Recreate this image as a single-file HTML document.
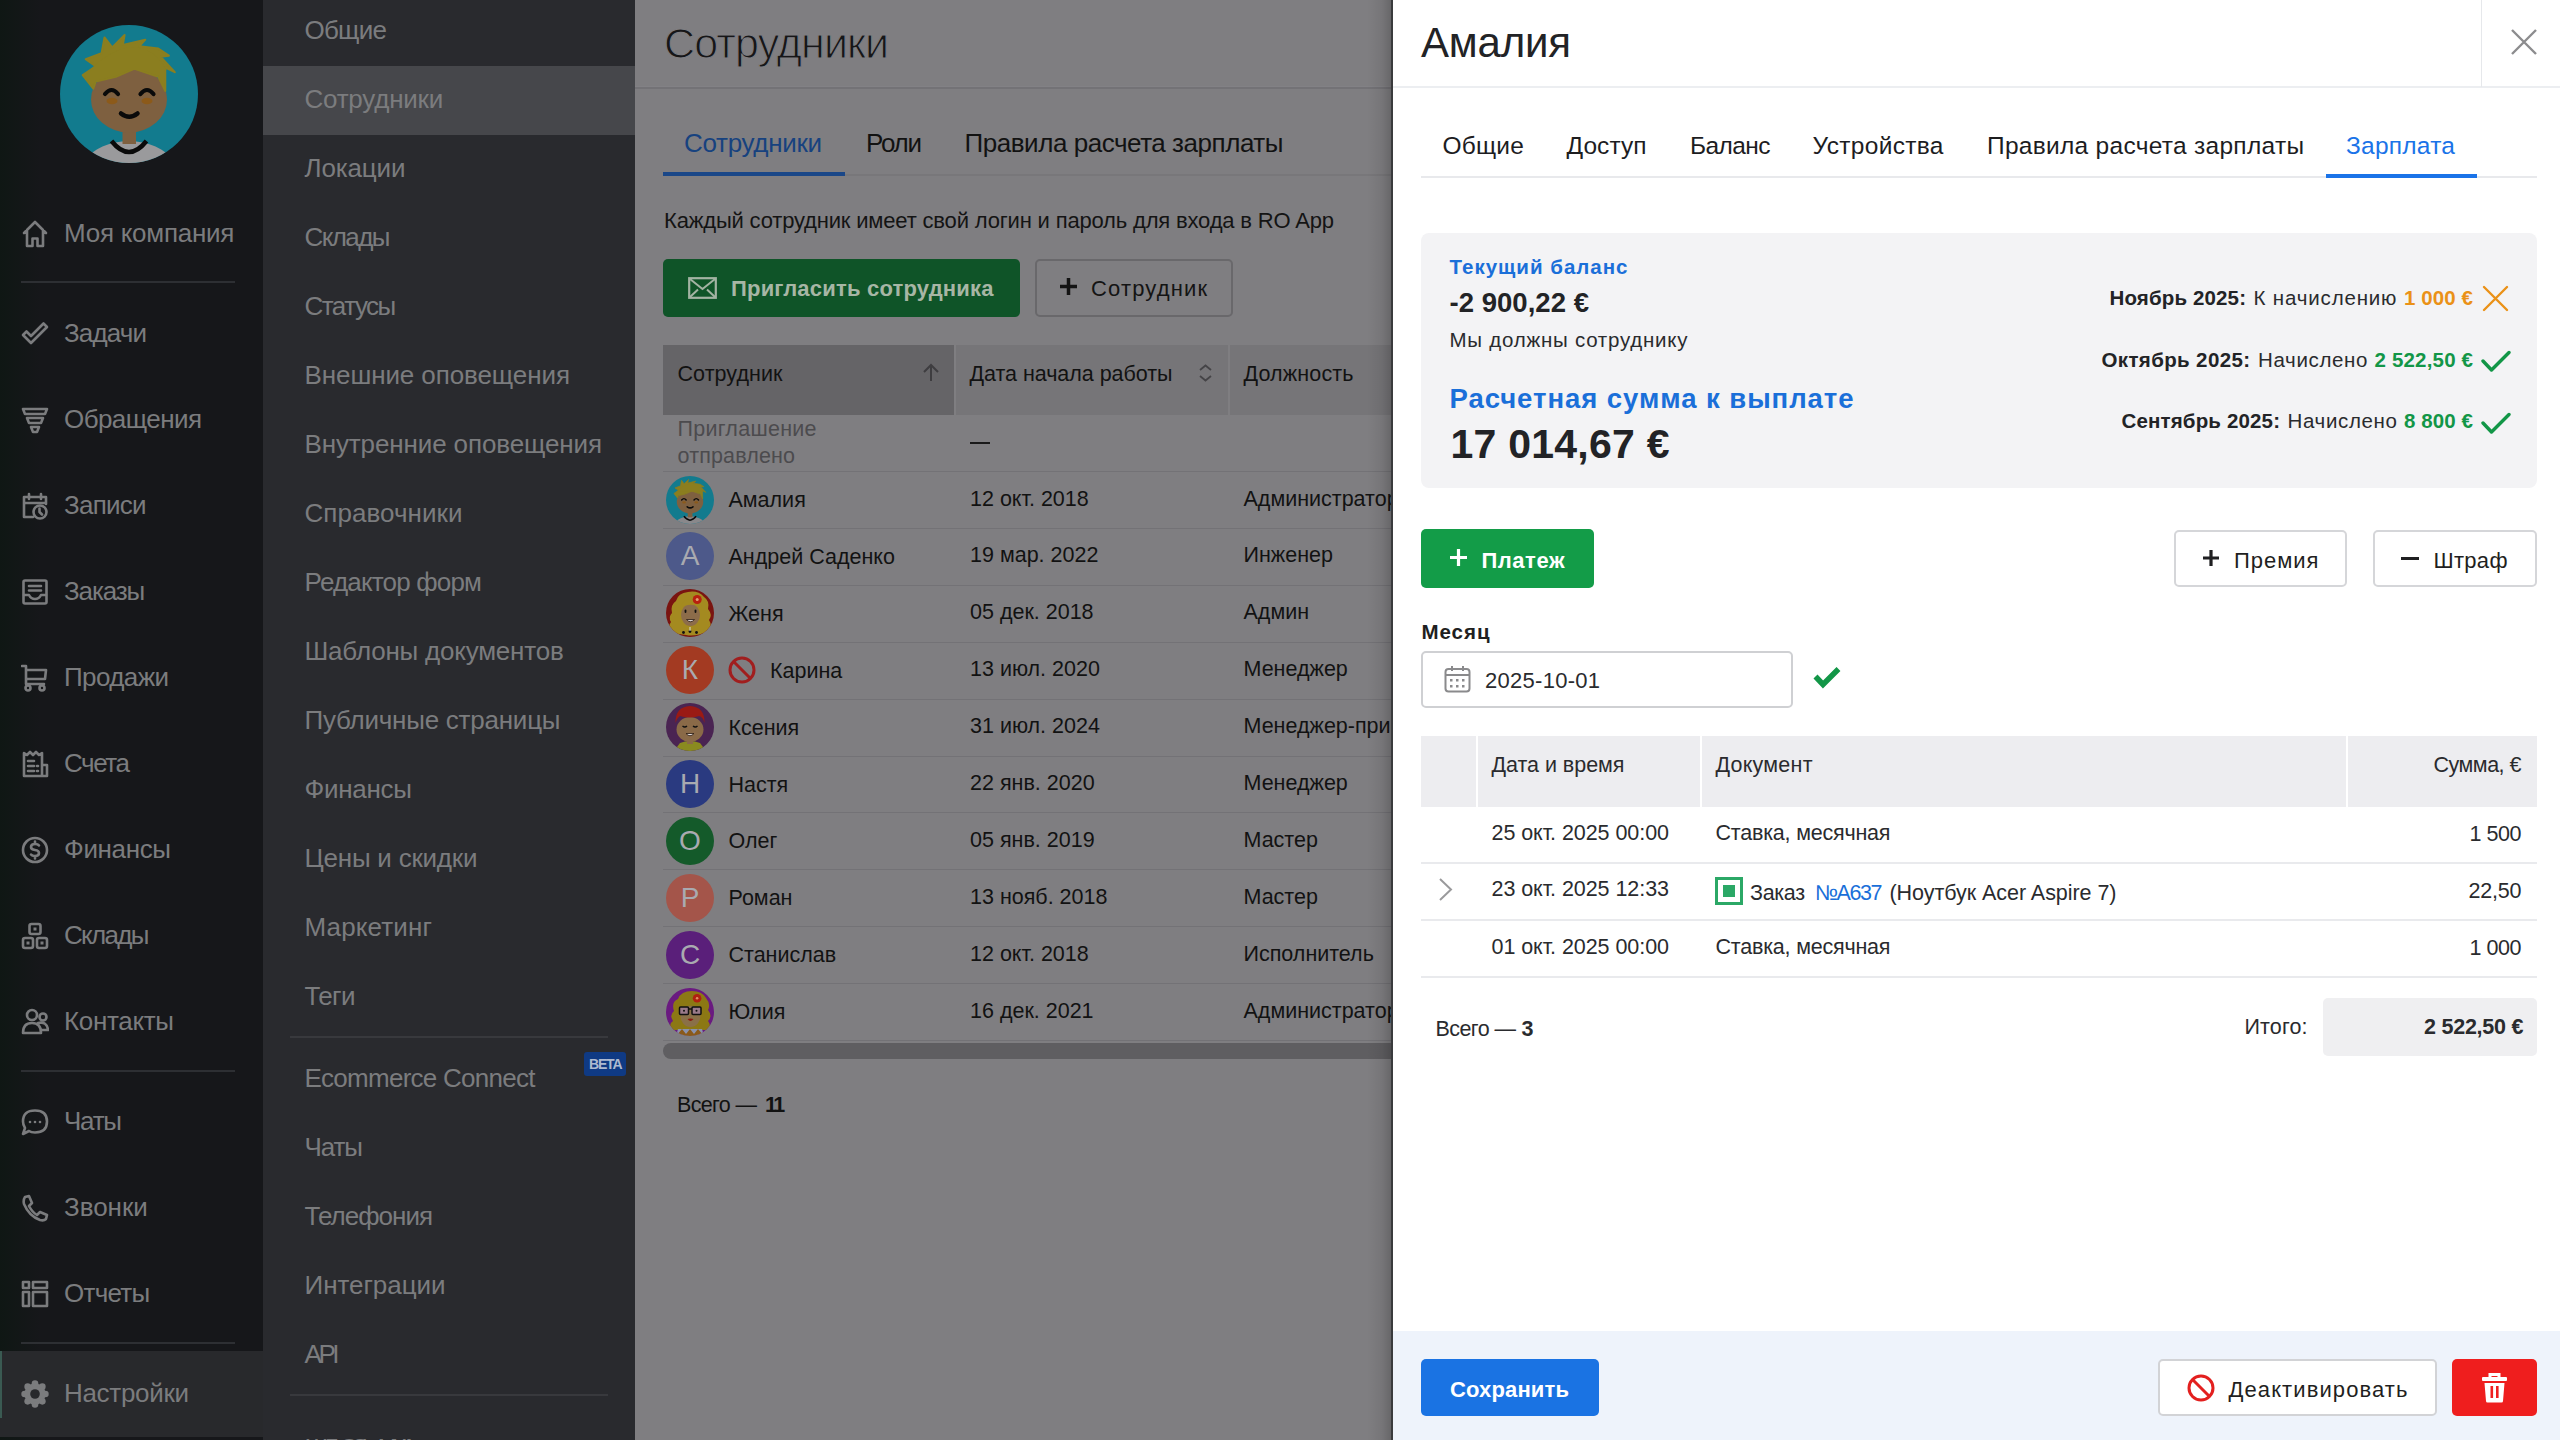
<!DOCTYPE html>
<html><head><meta charset="utf-8"><title>Сотрудники</title>
<style>
html,body{margin:0;padding:0;width:2560px;height:1440px;overflow:hidden;background:#7f7e81;}
body{position:relative;font-family:'Liberation Sans',sans-serif;}
</style></head><body>
<div style="position:absolute;left:0px;top:0px;width:263px;height:1440px;background:#16171a;"></div>
<div style="position:absolute;left:0px;top:0px;width:40px;height:1440px;background:linear-gradient(90deg,#0f1714 0%,rgba(22,23,26,0) 100%);"></div>
<div style="position:absolute;left:0px;top:1351px;width:263px;height:86px;background:#28292c;"></div>
<div style="position:absolute;left:0px;top:1351px;width:1.5px;height:67px;background:#3a5a52;"></div>
<div style="position:absolute;left:21px;top:281px;width:214px;height:2px;background:#2d2f33;"></div>
<div style="position:absolute;left:21px;top:1070px;width:214px;height:2px;background:#2d2f33;"></div>
<div style="position:absolute;left:21px;top:1342px;width:214px;height:2px;background:#2d2f33;"></div>
<svg style="position:absolute;left:59.5px;top:24.5px" width="138" height="138" viewBox="0 0 138 138">
<defs><clipPath id="cb1"><circle cx="69" cy="69" r="69"/></clipPath></defs>
<g clip-path="url(#cb1)">
<rect width="138" height="138" fill="#127b8e"/>
<path d="M10 160 C 22 128, 42 117, 69 116 C 96 117, 116 128, 128 160 Z" fill="#9a9a9c"/>
<rect x="62.5" y="98" width="13.5" height="21" fill="#7e6040"/>
<path d="M51.5 116 Q69 138 86.5 116" stroke="#0a0a0a" stroke-width="4.5" fill="none"/>
<ellipse cx="69" cy="74.5" rx="38" ry="33" fill="#7e6040"/>
<path d="M22.7 50.1 L35.7 41.3 L25.7 34.2 L41.6 28.3 L44.5 12.4 L52.2 22.4 L64.6 10 L62.8 20 L85.3 14.7 L79.4 21.2 L98.3 23.6 L108.9 30.7 L100.6 31.8 L114.8 47.2 L105.3 42.5 L105.3 66.1 L98.3 51.9 L74.7 43.7 L55.8 51.9 L35.7 56.6 L33.3 63.7 Z" fill="#8b7e1f" stroke="#8b7e1f" stroke-width="2" stroke-linejoin="round"/>
<path d="M30 45 Q50 25 70 22 Q95 22 106 45 Z" fill="#8b7e1f"/>
<path d="M45 69 Q51.6 61 58 69" stroke="#0a0a0a" stroke-width="4.2" fill="none" stroke-linecap="round"/>
<path d="M80.5 69 Q87 61 93.5 69" stroke="#0a0a0a" stroke-width="4.2" fill="none" stroke-linecap="round"/>
<ellipse cx="52" cy="76" rx="5.5" ry="3.2" fill="#8c5a1a"/>
<ellipse cx="87" cy="76" rx="5.5" ry="3.2" fill="#8c5a1a"/>
<path d="M61 88.5 Q69.3 95 77.5 88.5" stroke="#0a0a0a" stroke-width="4.5" fill="none" stroke-linecap="round"/>
</g></svg>
<svg style="position:absolute;left:21px;top:220px;" width="28" height="28" viewBox="0 0 28 28"><path d="M3 13 L14 2 L25 13 M6 10 V26 H11.5 V18.5 H16.5 V26 H22 V10" fill="none" stroke="#7b7c7e" stroke-width="2.6" stroke-linejoin="round" stroke-linecap="round"/></svg>
<div style="font-family:'Liberation Sans',sans-serif;font-size:26px;line-height:26px;font-weight:400;color:#7b7c7e;letter-spacing:-0.256px;position:absolute;left:64.00px;top:220.00px;white-space:pre;">Моя компания</div>
<svg style="position:absolute;left:21px;top:320px;" width="28" height="28" viewBox="0 0 28 28"><path d="M2 15 L10 23 L26 7 L22.5 3.5 L10 16 L5.5 11.5 Z" fill="none" stroke="#7b7c7e" stroke-width="2.6" stroke-linejoin="round" stroke-linecap="round" stroke-width="2.2"/></svg>
<div style="font-family:'Liberation Sans',sans-serif;font-size:26px;line-height:26px;font-weight:400;color:#7b7c7e;letter-spacing:-0.859px;position:absolute;left:64.00px;top:320.00px;white-space:pre;">Задачи</div>
<svg style="position:absolute;left:21px;top:406px;" width="28" height="28" viewBox="0 0 28 28"><path d="M2 3 H26 L24 8 H4 Z M6 12 H22 L20 17 H8 Z M10 21 H18 L16 26 H12 Z" fill="none" stroke="#7b7c7e" stroke-width="2.6" stroke-linejoin="round" stroke-linecap="round" stroke-width="2.3"/></svg>
<div style="font-family:'Liberation Sans',sans-serif;font-size:26px;line-height:26px;font-weight:400;color:#7b7c7e;letter-spacing:-0.570px;position:absolute;left:64.00px;top:406.00px;white-space:pre;">Обращения</div>
<svg style="position:absolute;left:21px;top:492px;" width="28" height="28" viewBox="0 0 28 28"><path d="M12 25 H3 V5 H25 V12 M3 11 H25 M8 2 V7 M20 2 V7 M12 5 H16" fill="none" stroke="#7b7c7e" stroke-width="2.6" stroke-linejoin="round" stroke-linecap="round" stroke-width="2.3"/><circle cx="19" cy="20" r="6.5" fill="none" stroke="#7b7c7e" stroke-width="2.6" stroke-linejoin="round" stroke-linecap="round" stroke-width="2.3"/><path d="M18.5 16.5 V20 L21 22.5" fill="none" stroke="#7b7c7e" stroke-width="2.6" stroke-linejoin="round" stroke-linecap="round" stroke-width="2"/></svg>
<div style="font-family:'Liberation Sans',sans-serif;font-size:26px;line-height:26px;font-weight:400;color:#7b7c7e;letter-spacing:-0.759px;position:absolute;left:64.00px;top:492.00px;white-space:pre;">Записи</div>
<svg style="position:absolute;left:21px;top:578px;" width="28" height="28" viewBox="0 0 28 28"><rect x="2.5" y="2.5" width="23" height="23" rx="1.5" fill="none" stroke="#7b7c7e" stroke-width="2.6" stroke-linejoin="round" stroke-linecap="round" stroke-width="2.4"/><path d="M8 8 H20 M8 12.5 H20 M3 17 H8 Q10 21 14 21 Q18 21 20 17 H25" fill="none" stroke="#7b7c7e" stroke-width="2.6" stroke-linejoin="round" stroke-linecap="round" stroke-width="2.3"/></svg>
<div style="font-family:'Liberation Sans',sans-serif;font-size:26px;line-height:26px;font-weight:400;color:#7b7c7e;letter-spacing:-1.128px;position:absolute;left:64.00px;top:578.00px;white-space:pre;">Заказы</div>
<svg style="position:absolute;left:21px;top:664px;" width="28" height="28" viewBox="0 0 28 28"><path d="M1 2 H5 V20 H23 M5 6 H25 L24 15 H5" fill="none" stroke="#7b7c7e" stroke-width="2.6" stroke-linejoin="round" stroke-linecap="round" stroke-width="2.3"/><circle cx="7" cy="24" r="2.5" fill="none" stroke="#7b7c7e" stroke-width="2.6" stroke-linejoin="round" stroke-linecap="round" stroke-width="2.2"/><circle cx="21" cy="24" r="2.5" fill="none" stroke="#7b7c7e" stroke-width="2.6" stroke-linejoin="round" stroke-linecap="round" stroke-width="2.2"/></svg>
<div style="font-family:'Liberation Sans',sans-serif;font-size:26px;line-height:26px;font-weight:400;color:#7b7c7e;letter-spacing:-0.599px;position:absolute;left:64.00px;top:664.00px;white-space:pre;">Продажи</div>
<svg style="position:absolute;left:21px;top:750px;" width="28" height="28" viewBox="0 0 28 28"><path d="M3 26 V3 L6 5 L9 2 L12 5 L15 2 L18 5 L21 3 V26 Z M21 15 H26 V26 H21 M7 11 H13 M7 16 H13 M7 21 H13 M16 16 H17 M16 21 H17" fill="none" stroke="#7b7c7e" stroke-width="2.6" stroke-linejoin="round" stroke-linecap="round" stroke-width="2.3"/></svg>
<div style="font-family:'Liberation Sans',sans-serif;font-size:26px;line-height:26px;font-weight:400;color:#7b7c7e;letter-spacing:-1.426px;position:absolute;left:64.00px;top:750.00px;white-space:pre;">Счета</div>
<svg style="position:absolute;left:21px;top:836px;" width="28" height="28" viewBox="0 0 28 28"><circle cx="14" cy="14" r="12" fill="none" stroke="#7b7c7e" stroke-width="2.6" stroke-linejoin="round" stroke-linecap="round" stroke-width="2.4"/><path d="M18 9.5 Q17 8 14 8 Q10 8 10 11 Q10 13.5 14 14 Q18 14.5 18 17 Q18 20 14 20 Q11 20 10 18.5 M14 5.5 V8 M14 20 V22.5" fill="none" stroke="#7b7c7e" stroke-width="2.6" stroke-linejoin="round" stroke-linecap="round" stroke-width="2.2"/></svg>
<div style="font-family:'Liberation Sans',sans-serif;font-size:26px;line-height:26px;font-weight:400;color:#7b7c7e;letter-spacing:-0.359px;position:absolute;left:64.00px;top:836.00px;white-space:pre;">Финансы</div>
<svg style="position:absolute;left:21px;top:922px;" width="28" height="28" viewBox="0 0 28 28"><rect x="8.5" y="2" width="11" height="10" rx="2" fill="none" stroke="#7b7c7e" stroke-width="2.6" stroke-linejoin="round" stroke-linecap="round" stroke-width="2.3"/><rect x="2" y="16" width="10" height="10" rx="2" fill="none" stroke="#7b7c7e" stroke-width="2.6" stroke-linejoin="round" stroke-linecap="round" stroke-width="2.3"/><rect x="16" y="16" width="10" height="10" rx="2" fill="none" stroke="#7b7c7e" stroke-width="2.6" stroke-linejoin="round" stroke-linecap="round" stroke-width="2.3"/><rect x="12.5" y="5.5" width="3" height="3" fill="#7b7c7e"/><rect x="5.5" y="19.5" width="3" height="3" fill="#7b7c7e"/><rect x="19.5" y="19.5" width="3" height="3" fill="#7b7c7e"/></svg>
<div style="font-family:'Liberation Sans',sans-serif;font-size:26px;line-height:26px;font-weight:400;color:#7b7c7e;letter-spacing:-1.688px;position:absolute;left:64.00px;top:922.00px;white-space:pre;">Склады</div>
<svg style="position:absolute;left:21px;top:1008px;" width="28" height="28" viewBox="0 0 28 28"><circle cx="11" cy="7" r="5" fill="none" stroke="#7b7c7e" stroke-width="2.6" stroke-linejoin="round" stroke-linecap="round" stroke-width="2.3"/><circle cx="22" cy="9" r="3.5" fill="none" stroke="#7b7c7e" stroke-width="2.6" stroke-linejoin="round" stroke-linecap="round" stroke-width="2.2"/><path d="M2 25 Q2 15 11 15 Q20 15 20 25 Z M17 15 Q26 13 27 22 L21 22" fill="none" stroke="#7b7c7e" stroke-width="2.6" stroke-linejoin="round" stroke-linecap="round" stroke-width="2.3"/></svg>
<div style="font-family:'Liberation Sans',sans-serif;font-size:26px;line-height:26px;font-weight:400;color:#7b7c7e;letter-spacing:-0.330px;position:absolute;left:64.00px;top:1008.00px;white-space:pre;">Контакты</div>
<svg style="position:absolute;left:21px;top:1108px;" width="28" height="28" viewBox="0 0 28 28"><path d="M14 2.5 Q26 2.5 26 13.5 Q26 24.5 14 24.5 Q10 24.5 8 23 L2 26 L4 20 Q2 17 2 13.5 Q2 2.5 14 2.5 Z" fill="none" stroke="#7b7c7e" stroke-width="2.6" stroke-linejoin="round" stroke-linecap="round" stroke-width="2.3"/><circle cx="9" cy="14" r="1.3" fill="#7b7c7e"/><circle cx="14" cy="14" r="1.3" fill="#7b7c7e"/><circle cx="19" cy="14" r="1.3" fill="#7b7c7e"/></svg>
<div style="font-family:'Liberation Sans',sans-serif;font-size:26px;line-height:26px;font-weight:400;color:#7b7c7e;letter-spacing:-1.276px;position:absolute;left:64.00px;top:1108.00px;white-space:pre;">Чаты</div>
<svg style="position:absolute;left:21px;top:1194px;" width="28" height="28" viewBox="0 0 28 28"><path d="M8 2 L11 9 L8 12 Q11 18 16 21 L19 18 L26 21 L25 25 Q23 27 19 26 Q8 22 3 10 Q2 6 4 3 Z" fill="none" stroke="#7b7c7e" stroke-width="2.6" stroke-linejoin="round" stroke-linecap="round" stroke-width="2.3"/></svg>
<div style="font-family:'Liberation Sans',sans-serif;font-size:26px;line-height:26px;font-weight:400;color:#7b7c7e;letter-spacing:-0.041px;position:absolute;left:64.00px;top:1194.00px;white-space:pre;">Звонки</div>
<svg style="position:absolute;left:21px;top:1280px;" width="28" height="28" viewBox="0 0 28 28"><rect x="2" y="2" width="6" height="6" fill="none" stroke="#7b7c7e" stroke-width="2.6" stroke-linejoin="round" stroke-linecap="round" stroke-width="2.3"/><rect x="12" y="2" width="14" height="6" fill="none" stroke="#7b7c7e" stroke-width="2.6" stroke-linejoin="round" stroke-linecap="round" stroke-width="2.3"/><rect x="2" y="12" width="6" height="14" fill="none" stroke="#7b7c7e" stroke-width="2.6" stroke-linejoin="round" stroke-linecap="round" stroke-width="2.3"/><rect x="12" y="12" width="14" height="14" fill="none" stroke="#7b7c7e" stroke-width="2.6" stroke-linejoin="round" stroke-linecap="round" stroke-width="2.3"/></svg>
<div style="font-family:'Liberation Sans',sans-serif;font-size:26px;line-height:26px;font-weight:400;color:#7b7c7e;letter-spacing:-0.725px;position:absolute;left:64.00px;top:1280.00px;white-space:pre;">Отчеты</div>
<svg style="position:absolute;left:21px;top:1380px;" width="28" height="28" viewBox="0 0 28 28"><g fill="#7b7c7e"><circle cx="14" cy="14" r="10.6"/><circle cx="24.40" cy="14.00" r="3.3"/><circle cx="21.35" cy="21.35" r="3.3"/><circle cx="14.00" cy="24.40" r="3.3"/><circle cx="6.65" cy="21.35" r="3.3"/><circle cx="3.60" cy="14.00" r="3.3"/><circle cx="6.65" cy="6.65" r="3.3"/><circle cx="14.00" cy="3.60" r="3.3"/><circle cx="21.35" cy="6.65" r="3.3"/></g><circle cx="14" cy="14" r="4.8" fill="#28292c"/></svg>
<div style="font-family:'Liberation Sans',sans-serif;font-size:26px;line-height:26px;font-weight:400;color:#7b7c7e;letter-spacing:-0.312px;position:absolute;left:64.00px;top:1380.00px;white-space:pre;">Настройки</div>
<div style="position:absolute;left:263px;top:0px;width:372px;height:1440px;background:#292a2e;"></div>
<div style="position:absolute;left:263px;top:66px;width:372px;height:69px;background:#46474b;"></div>
<div style="font-family:'Liberation Sans',sans-serif;font-size:26px;line-height:26px;font-weight:400;color:#7b7c7e;letter-spacing:-0.750px;position:absolute;left:304.50px;top:17.00px;white-space:pre;">Общие</div>
<div style="font-family:'Liberation Sans',sans-serif;font-size:26px;line-height:26px;font-weight:400;color:#7b7c7e;letter-spacing:-0.233px;position:absolute;left:304.50px;top:86.00px;white-space:pre;">Сотрудники</div>
<div style="font-family:'Liberation Sans',sans-serif;font-size:26px;line-height:26px;font-weight:400;color:#7b7c7e;letter-spacing:-0.146px;position:absolute;left:304.50px;top:155.00px;white-space:pre;">Локации</div>
<div style="font-family:'Liberation Sans',sans-serif;font-size:26px;line-height:26px;font-weight:400;color:#7b7c7e;letter-spacing:-1.587px;position:absolute;left:304.50px;top:224.00px;white-space:pre;">Склады</div>
<div style="font-family:'Liberation Sans',sans-serif;font-size:26px;line-height:26px;font-weight:400;color:#7b7c7e;letter-spacing:-1.523px;position:absolute;left:304.50px;top:293.00px;white-space:pre;">Статусы</div>
<div style="font-family:'Liberation Sans',sans-serif;font-size:26px;line-height:26px;font-weight:400;color:#7b7c7e;letter-spacing:-0.094px;position:absolute;left:304.50px;top:362.00px;white-space:pre;">Внешние оповещения</div>
<div style="font-family:'Liberation Sans',sans-serif;font-size:26px;line-height:26px;font-weight:400;color:#7b7c7e;letter-spacing:-0.123px;position:absolute;left:304.50px;top:431.00px;white-space:pre;">Внутренние оповещения</div>
<div style="font-family:'Liberation Sans',sans-serif;font-size:26px;line-height:26px;font-weight:400;color:#7b7c7e;letter-spacing:0.048px;position:absolute;left:304.50px;top:500.00px;white-space:pre;">Справочники</div>
<div style="font-family:'Liberation Sans',sans-serif;font-size:26px;line-height:26px;font-weight:400;color:#7b7c7e;letter-spacing:-0.820px;position:absolute;left:304.50px;top:569.00px;white-space:pre;">Редактор форм</div>
<div style="font-family:'Liberation Sans',sans-serif;font-size:26px;line-height:26px;font-weight:400;color:#7b7c7e;letter-spacing:-0.209px;position:absolute;left:304.50px;top:638.00px;white-space:pre;">Шаблоны документов</div>
<div style="font-family:'Liberation Sans',sans-serif;font-size:26px;line-height:26px;font-weight:400;color:#7b7c7e;letter-spacing:-0.233px;position:absolute;left:304.50px;top:707.00px;white-space:pre;">Публичные страницы</div>
<div style="font-family:'Liberation Sans',sans-serif;font-size:26px;line-height:26px;font-weight:400;color:#7b7c7e;letter-spacing:-0.276px;position:absolute;left:304.50px;top:776.00px;white-space:pre;">Финансы</div>
<div style="font-family:'Liberation Sans',sans-serif;font-size:26px;line-height:26px;font-weight:400;color:#7b7c7e;letter-spacing:-0.224px;position:absolute;left:304.50px;top:845.00px;white-space:pre;">Цены и скидки</div>
<div style="font-family:'Liberation Sans',sans-serif;font-size:26px;line-height:26px;font-weight:400;color:#7b7c7e;letter-spacing:0.135px;position:absolute;left:304.50px;top:914.00px;white-space:pre;">Маркетинг</div>
<div style="font-family:'Liberation Sans',sans-serif;font-size:26px;line-height:26px;font-weight:400;color:#7b7c7e;letter-spacing:-0.630px;position:absolute;left:304.50px;top:983.00px;white-space:pre;">Теги</div>
<div style="position:absolute;left:290px;top:1036px;width:318px;height:2px;background:#38393d;"></div>
<div style="font-family:'Liberation Sans',sans-serif;font-size:26px;line-height:26px;font-weight:400;color:#7b7c7e;letter-spacing:-0.735px;position:absolute;left:304.50px;top:1065.00px;white-space:pre;">Ecommerce Connect</div>
<div style="position:absolute;left:584px;top:1052px;width:42px;height:24px;background:#0f3a84;border-radius:3px;"></div>
<div style="font-family:'Liberation Sans',sans-serif;font-size:14px;line-height:14px;font-weight:700;color:#aebad0;letter-spacing:-1.193px;position:absolute;left:589.00px;top:1057.00px;white-space:pre;">BETA</div>
<div style="font-family:'Liberation Sans',sans-serif;font-size:26px;line-height:26px;font-weight:400;color:#7b7c7e;letter-spacing:-1.109px;position:absolute;left:304.50px;top:1134.00px;white-space:pre;">Чаты</div>
<div style="font-family:'Liberation Sans',sans-serif;font-size:26px;line-height:26px;font-weight:400;color:#7b7c7e;letter-spacing:-0.996px;position:absolute;left:304.50px;top:1203.00px;white-space:pre;">Телефония</div>
<div style="font-family:'Liberation Sans',sans-serif;font-size:26px;line-height:26px;font-weight:400;color:#7b7c7e;letter-spacing:-0.052px;position:absolute;left:304.50px;top:1272.00px;white-space:pre;">Интеграции</div>
<div style="font-family:'Liberation Sans',sans-serif;font-size:26px;line-height:26px;font-weight:400;color:#7b7c7e;letter-spacing:-3.461px;position:absolute;left:304.50px;top:1341.00px;white-space:pre;">API</div>
<div style="position:absolute;left:290px;top:1394px;width:318px;height:2px;background:#38393d;"></div>
<div style="font-family:'Liberation Sans',sans-serif;font-size:26px;line-height:26px;font-weight:400;color:#7b7c7e;letter-spacing:-6.502px;position:absolute;left:304.50px;top:1435.00px;white-space:pre;">ШЛЮЗЫ И КА</div>
<div style="position:absolute;left:635px;top:0px;width:758px;height:1440px;background:#7f7e81;"></div>
<div style="position:absolute;left:635px;top:86px;width:758px;height:1px;background:#828185;"></div>
<div style="position:absolute;left:635px;top:87px;width:758px;height:2px;background:#737276;"></div>
<div style="font-family:'Liberation Sans',sans-serif;font-size:43px;line-height:43px;font-weight:400;color:#161618;letter-spacing:-0.880px;position:absolute;left:664.00px;top:22.00px;white-space:pre;-webkit-text-stroke:1.1px #7f7e81;">Сотрудники</div>
<div style="position:absolute;left:663px;top:174px;width:730px;height:2px;background:#78777a;"></div>
<div style="position:absolute;left:663px;top:172px;width:182px;height:4px;background:#1a4788;"></div>
<div style="font-family:'Liberation Sans',sans-serif;font-size:26px;line-height:26px;font-weight:400;color:#17427f;letter-spacing:-0.316px;position:absolute;left:684.00px;top:130.00px;white-space:pre;">Сотрудники</div>
<div style="font-family:'Liberation Sans',sans-serif;font-size:26px;line-height:26px;font-weight:400;color:#121212;letter-spacing:-1.266px;position:absolute;left:866.00px;top:130.00px;white-space:pre;">Роли</div>
<div style="font-family:'Liberation Sans',sans-serif;font-size:26px;line-height:26px;font-weight:400;color:#121212;letter-spacing:-0.454px;position:absolute;left:964.50px;top:130.00px;white-space:pre;">Правила расчета зарплаты</div>
<div style="font-family:'Liberation Sans',sans-serif;font-size:22px;line-height:22px;font-weight:400;color:#141414;letter-spacing:-0.173px;position:absolute;left:664.00px;top:210.00px;white-space:pre;">Каждый сотрудник имеет свой логин и пароль для входа в RO App</div>
<div style="position:absolute;left:663px;top:259px;width:357px;height:58px;background:#0f5428;border-radius:5px;"></div>
<svg style="position:absolute;left:688px;top:277px;" width="29" height="22" viewBox="0 0 29 22"><rect x="1.2" y="1.2" width="26.6" height="19.6" fill="none" stroke="#a3b3a3" stroke-width="2.2"/><path d="M2 2 L14.5 12 L27 2 M2 20 L10 12.5 M27 20 L19 12.5" fill="none" stroke="#a3b3a3" stroke-width="2"/></svg>
<div style="font-family:'Liberation Sans',sans-serif;font-size:22px;line-height:22px;font-weight:700;color:#a7b6a5;letter-spacing:0.198px;position:absolute;left:731.00px;top:278.00px;white-space:pre;">Пригласить сотрудника</div>
<div style="position:absolute;left:1035px;top:259px;width:198px;height:58px;background:#7f7e81;border:2px solid #69686b;border-radius:5px;box-sizing:border-box;"></div>
<svg style="position:absolute;left:1059px;top:277px;" width="19" height="19" viewBox="0 0 19 19"><path d="M9.5 1 V18 M1 9.5 H18" stroke="#141414" stroke-width="3.5"/></svg>
<div style="font-family:'Liberation Sans',sans-serif;font-size:22px;line-height:22px;font-weight:400;color:#141414;letter-spacing:1.141px;position:absolute;left:1091.00px;top:278.00px;white-space:pre;">Сотрудник</div>
<div style="position:absolute;left:663px;top:345px;width:291px;height:70px;background:#656467;"></div>
<div style="position:absolute;left:956px;top:345px;width:272px;height:70px;background:#767578;"></div>
<div style="position:absolute;left:1230px;top:345px;width:163px;height:70px;background:#767578;"></div>
<div style="font-family:'Liberation Sans',sans-serif;font-size:21.5px;line-height:21.5px;font-weight:400;color:#121212;letter-spacing:0.068px;position:absolute;left:677.50px;top:364.00px;white-space:pre;">Сотрудник</div>
<svg style="position:absolute;left:922px;top:363px;" width="18" height="19" viewBox="0 0 18 19"><path d="M9 18 V2 M2 9 L9 2 L16 9" fill="none" stroke="#3e3d40" stroke-width="2"/></svg>
<div style="font-family:'Liberation Sans',sans-serif;font-size:21.5px;line-height:21.5px;font-weight:400;color:#121212;letter-spacing:-0.035px;position:absolute;left:969.50px;top:364.00px;white-space:pre;">Дата начала работы</div>
<svg style="position:absolute;left:1198px;top:364px;" width="15" height="18" viewBox="0 0 15 18"><path d="M2 6 L7.5 1.5 L13 6 M2 12 L7.5 16.5 L13 12" fill="none" stroke="#454447" stroke-width="1.8"/></svg>
<div style="font-family:'Liberation Sans',sans-serif;font-size:21.5px;line-height:21.5px;font-weight:400;color:#121212;letter-spacing:0.145px;position:absolute;left:1243.50px;top:364.00px;white-space:pre;">Должность</div>
<div style="font-family:'Liberation Sans',sans-serif;font-size:21.5px;line-height:21.5px;font-weight:400;color:#4c4b4e;letter-spacing:0.266px;position:absolute;left:677.50px;top:419.00px;white-space:pre;">Приглашение</div>
<div style="font-family:'Liberation Sans',sans-serif;font-size:21.5px;line-height:21.5px;font-weight:400;color:#4c4b4e;letter-spacing:0.149px;position:absolute;left:677.50px;top:446.00px;white-space:pre;">отправлено</div>
<div style="position:absolute;left:970px;top:441.5px;width:19.5px;height:2.0px;background:#1a1a1a;"></div>
<div style="position:absolute;left:663px;top:471px;width:730px;height:1px;background:#737276;"></div>
<div style="position:absolute;left:663px;top:528px;width:730px;height:1px;background:#737276;"></div>
<div style="position:absolute;left:663px;top:585px;width:730px;height:1px;background:#737276;"></div>
<div style="position:absolute;left:663px;top:642px;width:730px;height:1px;background:#737276;"></div>
<div style="position:absolute;left:663px;top:699px;width:730px;height:1px;background:#737276;"></div>
<div style="position:absolute;left:663px;top:756px;width:730px;height:1px;background:#737276;"></div>
<div style="position:absolute;left:663px;top:812px;width:730px;height:1px;background:#737276;"></div>
<div style="position:absolute;left:663px;top:869px;width:730px;height:1px;background:#737276;"></div>
<div style="position:absolute;left:663px;top:926px;width:730px;height:1px;background:#737276;"></div>
<div style="position:absolute;left:663px;top:983px;width:730px;height:1px;background:#737276;"></div>
<div style="position:absolute;left:663px;top:1040px;width:730px;height:1px;background:#737276;"></div>
<svg style="position:absolute;left:666px;top:475.5px" width="48" height="48" viewBox="0 0 138 138">
<defs><clipPath id="cb2"><circle cx="69" cy="69" r="69"/></clipPath></defs>
<g clip-path="url(#cb2)">
<rect width="138" height="138" fill="#127b8e"/>
<path d="M10 160 C 22 128, 42 117, 69 116 C 96 117, 116 128, 128 160 Z" fill="#89888b"/>
<rect x="62.5" y="98" width="13.5" height="21" fill="#7e6040"/>
<path d="M51.5 116 Q69 138 86.5 116" stroke="#0a0a0a" stroke-width="4.5" fill="none"/>
<ellipse cx="69" cy="74.5" rx="38" ry="33" fill="#7e6040"/>
<path d="M22.7 50.1 L35.7 41.3 L25.7 34.2 L41.6 28.3 L44.5 12.4 L52.2 22.4 L64.6 10 L62.8 20 L85.3 14.7 L79.4 21.2 L98.3 23.6 L108.9 30.7 L100.6 31.8 L114.8 47.2 L105.3 42.5 L105.3 66.1 L98.3 51.9 L74.7 43.7 L55.8 51.9 L35.7 56.6 L33.3 63.7 Z" fill="#8b7e1f" stroke="#8b7e1f" stroke-width="2" stroke-linejoin="round"/>
<path d="M30 45 Q50 25 70 22 Q95 22 106 45 Z" fill="#8b7e1f"/>
<path d="M45 69 Q51.6 61 58 69" stroke="#0a0a0a" stroke-width="4.2" fill="none" stroke-linecap="round"/>
<path d="M80.5 69 Q87 61 93.5 69" stroke="#0a0a0a" stroke-width="4.2" fill="none" stroke-linecap="round"/>
<ellipse cx="52" cy="76" rx="5.5" ry="3.2" fill="#8c5a1a"/>
<ellipse cx="87" cy="76" rx="5.5" ry="3.2" fill="#8c5a1a"/>
<path d="M61 88.5 Q69.3 95 77.5 88.5" stroke="#0a0a0a" stroke-width="4.5" fill="none" stroke-linecap="round"/>
</g></svg>
<div style="font-family:'Liberation Sans',sans-serif;font-size:21.5px;line-height:21.5px;font-weight:400;color:#121212;position:absolute;left:728.50px;top:490.00px;white-space:pre;">Амалия</div>
<div style="font-family:'Liberation Sans',sans-serif;font-size:21.5px;line-height:21.5px;font-weight:400;color:#121212;position:absolute;left:970.00px;top:489.00px;white-space:pre;">12 окт. 2018</div>
<div style="font-family:'Liberation Sans',sans-serif;font-size:21.5px;line-height:21.5px;font-weight:400;color:#121212;position:absolute;left:1243.50px;top:489.00px;white-space:pre;">Администратор</div>
<div style="position:absolute;left:666px;top:532.4px;width:48px;height:48px;border-radius:50%;background:#4d598a;"></div>
<div style="position:absolute;left:666px;top:532.4px;width:48px;height:48px;line-height:48px;text-align:center;font-family:'Liberation Sans',sans-serif;font-size:28px;color:#a9aab0;">А</div>
<div style="font-family:'Liberation Sans',sans-serif;font-size:21.5px;line-height:21.5px;font-weight:400;color:#121212;position:absolute;left:728.50px;top:547.00px;white-space:pre;">Андрей Саденко</div>
<div style="font-family:'Liberation Sans',sans-serif;font-size:21.5px;line-height:21.5px;font-weight:400;color:#121212;position:absolute;left:970.00px;top:545.00px;white-space:pre;">19 мар. 2022</div>
<div style="font-family:'Liberation Sans',sans-serif;font-size:21.5px;line-height:21.5px;font-weight:400;color:#121212;position:absolute;left:1243.50px;top:545.00px;white-space:pre;">Инженер</div>
<svg style="position:absolute;left:666px;top:589.3px" width="48" height="48" viewBox="0 0 48 48"><defs><clipPath id="cg3"><circle cx="24" cy="24" r="24"/></clipPath></defs><g clip-path="url(#cg3)"><rect width="48" height="48" fill="#7a1410"/>
<path d="M6 44 Q1 38 5 33 Q2 28 6 24 Q4 16 10 12 Q12 4 22 3 Q32 1 38 8 Q44 12 42 20 Q47 26 43 31 Q47 37 42 42 Q30 48 20 46 Z" fill="#a48a20"/>
<ellipse cx="24.5" cy="26" rx="9.5" ry="11" fill="#8c6c4a"/>
<path d="M14 18 Q18 9 27 10 Q35 12 36 20 Q30 15 22 16 Z" fill="#a48a20"/>
<circle cx="31.2" cy="10.5" r="4.5" fill="#b8200f"/><circle cx="31.2" cy="10.5" r="1.5" fill="#e0a070"/>
<rect x="18.6" y="20.5" width="1.8" height="3.5" rx="0.9" fill="#111"/><rect x="28.6" y="20.5" width="1.8" height="3.5" rx="0.9" fill="#111"/>
<path d="M20.5 30.5 Q24.5 35 28.5 30.5 Z" fill="#d8d0d0" stroke="#2a1a10" stroke-width="0.8"/>
<circle cx="17.5" cy="43.5" r="1.4" fill="#111"/><circle cx="24" cy="42.5" r="1.4" fill="#111"/><circle cx="30.5" cy="43.5" r="1.4" fill="#111"/><path d="M24 38 V42" stroke="#ddd" stroke-width="1"/></g></svg>
<div style="font-family:'Liberation Sans',sans-serif;font-size:21.5px;line-height:21.5px;font-weight:400;color:#121212;position:absolute;left:728.50px;top:604.00px;white-space:pre;">Женя</div>
<div style="font-family:'Liberation Sans',sans-serif;font-size:21.5px;line-height:21.5px;font-weight:400;color:#121212;position:absolute;left:970.00px;top:602.00px;white-space:pre;">05 дек. 2018</div>
<div style="font-family:'Liberation Sans',sans-serif;font-size:21.5px;line-height:21.5px;font-weight:400;color:#121212;position:absolute;left:1243.50px;top:602.00px;white-space:pre;">Админ</div>
<div style="position:absolute;left:666px;top:646.2px;width:48px;height:48px;border-radius:50%;background:#a33a22;"></div>
<div style="position:absolute;left:666px;top:646.2px;width:48px;height:48px;line-height:48px;text-align:center;font-family:'Liberation Sans',sans-serif;font-size:28px;color:#a9aab0;">К</div>
<svg style="position:absolute;left:728px;top:656.2px;" width="28" height="28" viewBox="0 0 28 28"><circle cx="14" cy="14" r="12" fill="none" stroke="#a11e1e" stroke-width="3"/><path d="M5.5 5.5 L22.5 22.5" stroke="#a11e1e" stroke-width="3"/></svg>
<div style="font-family:'Liberation Sans',sans-serif;font-size:21.5px;line-height:21.5px;font-weight:400;color:#121212;position:absolute;left:770.00px;top:661.00px;white-space:pre;">Карина</div>
<div style="font-family:'Liberation Sans',sans-serif;font-size:21.5px;line-height:21.5px;font-weight:400;color:#121212;position:absolute;left:970.00px;top:659.00px;white-space:pre;">13 июл. 2020</div>
<div style="font-family:'Liberation Sans',sans-serif;font-size:21.5px;line-height:21.5px;font-weight:400;color:#121212;position:absolute;left:1243.50px;top:659.00px;white-space:pre;">Менеджер</div>
<svg style="position:absolute;left:666px;top:703.1px" width="48" height="48" viewBox="0 0 48 48"><defs><clipPath id="cg4"><circle cx="24" cy="24" r="24"/></clipPath></defs><g clip-path="url(#cg4)"><rect width="48" height="48" fill="#4a2452"/>
<path d="M14 40 Q24 36 34 40 L40 48 H8 Z" fill="#8a8a20"/>
<rect x="21" y="34" width="6" height="7" fill="#8a6a48"/>
<ellipse cx="24" cy="26.5" rx="13.5" ry="12.5" fill="#8a6a48"/>
<path d="M9.5 20 Q9 4 24 3 Q39 4 38.5 20 Q37 14 33 13 Q24 16 14 13 Q11 15 9.5 20 Z" fill="#9a1a14"/>
<path d="M16.5 23 Q18.8 25 21 23" stroke="#111" stroke-width="1.4" fill="none"/><path d="M27 23 Q29.3 25 31.5 23" stroke="#111" stroke-width="1.4" fill="none"/>
<path d="M20 30.5 Q24 35 28 30.5 Z" fill="#e0d8d8" stroke="#2a1a10" stroke-width="0.8"/></g></svg>
<div style="font-family:'Liberation Sans',sans-serif;font-size:21.5px;line-height:21.5px;font-weight:400;color:#121212;position:absolute;left:728.50px;top:718.00px;white-space:pre;">Ксения</div>
<div style="font-family:'Liberation Sans',sans-serif;font-size:21.5px;line-height:21.5px;font-weight:400;color:#121212;position:absolute;left:970.00px;top:716.00px;white-space:pre;">31 июл. 2024</div>
<div style="font-family:'Liberation Sans',sans-serif;font-size:21.5px;line-height:21.5px;font-weight:400;color:#121212;position:absolute;left:1243.50px;top:716.00px;white-space:pre;">Менеджер-приемщик</div>
<div style="position:absolute;left:666px;top:760.0px;width:48px;height:48px;border-radius:50%;background:#2a3a80;"></div>
<div style="position:absolute;left:666px;top:760.0px;width:48px;height:48px;line-height:48px;text-align:center;font-family:'Liberation Sans',sans-serif;font-size:28px;color:#a9aab0;">Н</div>
<div style="font-family:'Liberation Sans',sans-serif;font-size:21.5px;line-height:21.5px;font-weight:400;color:#121212;position:absolute;left:728.50px;top:775.00px;white-space:pre;">Настя</div>
<div style="font-family:'Liberation Sans',sans-serif;font-size:21.5px;line-height:21.5px;font-weight:400;color:#121212;position:absolute;left:970.00px;top:773.00px;white-space:pre;">22 янв. 2020</div>
<div style="font-family:'Liberation Sans',sans-serif;font-size:21.5px;line-height:21.5px;font-weight:400;color:#121212;position:absolute;left:1243.50px;top:773.00px;white-space:pre;">Менеджер</div>
<div style="position:absolute;left:666px;top:816.9px;width:48px;height:48px;border-radius:50%;background:#145a2a;"></div>
<div style="position:absolute;left:666px;top:816.9px;width:48px;height:48px;line-height:48px;text-align:center;font-family:'Liberation Sans',sans-serif;font-size:28px;color:#a9aab0;">О</div>
<div style="font-family:'Liberation Sans',sans-serif;font-size:21.5px;line-height:21.5px;font-weight:400;color:#121212;position:absolute;left:728.50px;top:831.00px;white-space:pre;">Олег</div>
<div style="font-family:'Liberation Sans',sans-serif;font-size:21.5px;line-height:21.5px;font-weight:400;color:#121212;position:absolute;left:970.00px;top:830.00px;white-space:pre;">05 янв. 2019</div>
<div style="font-family:'Liberation Sans',sans-serif;font-size:21.5px;line-height:21.5px;font-weight:400;color:#121212;position:absolute;left:1243.50px;top:830.00px;white-space:pre;">Мастер</div>
<div style="position:absolute;left:666px;top:873.8px;width:48px;height:48px;border-radius:50%;background:#a4554a;"></div>
<div style="position:absolute;left:666px;top:873.8px;width:48px;height:48px;line-height:48px;text-align:center;font-family:'Liberation Sans',sans-serif;font-size:28px;color:#a9aab0;">Р</div>
<div style="font-family:'Liberation Sans',sans-serif;font-size:21.5px;line-height:21.5px;font-weight:400;color:#121212;position:absolute;left:728.50px;top:888.00px;white-space:pre;">Роман</div>
<div style="font-family:'Liberation Sans',sans-serif;font-size:21.5px;line-height:21.5px;font-weight:400;color:#121212;position:absolute;left:970.00px;top:887.00px;white-space:pre;">13 нояб. 2018</div>
<div style="font-family:'Liberation Sans',sans-serif;font-size:21.5px;line-height:21.5px;font-weight:400;color:#121212;position:absolute;left:1243.50px;top:887.00px;white-space:pre;">Мастер</div>
<div style="position:absolute;left:666px;top:930.7px;width:48px;height:48px;border-radius:50%;background:#5a1f7a;"></div>
<div style="position:absolute;left:666px;top:930.7px;width:48px;height:48px;line-height:48px;text-align:center;font-family:'Liberation Sans',sans-serif;font-size:28px;color:#a9aab0;">С</div>
<div style="font-family:'Liberation Sans',sans-serif;font-size:21.5px;line-height:21.5px;font-weight:400;color:#121212;position:absolute;left:728.50px;top:945.00px;white-space:pre;">Станислав</div>
<div style="font-family:'Liberation Sans',sans-serif;font-size:21.5px;line-height:21.5px;font-weight:400;color:#121212;position:absolute;left:970.00px;top:944.00px;white-space:pre;">12 окт. 2018</div>
<div style="font-family:'Liberation Sans',sans-serif;font-size:21.5px;line-height:21.5px;font-weight:400;color:#121212;position:absolute;left:1243.50px;top:944.00px;white-space:pre;">Исполнитель</div>
<svg style="position:absolute;left:666px;top:987.6px" width="48" height="48" viewBox="0 0 48 48"><defs><clipPath id="cg5"><circle cx="24" cy="24" r="24"/></clipPath></defs><g clip-path="url(#cg5)"><rect width="48" height="48" fill="#6a1a80"/>
<path d="M6 42 Q2 36 7 33 Q3 27 8 23 Q5 14 12 11 Q15 3 26 3 Q36 3 40 10 Q45 16 42 22 Q47 28 42 33 Q46 38 42 42 Z" fill="#8c7814"/>
<ellipse cx="24.5" cy="28" rx="10" ry="11" fill="#8a7048"/>
<path d="M14 22 Q16 12 26 12 Q34 13 36 22 Q30 17 22 18 Z" fill="#8c7814"/>
<circle cx="31.1" cy="10.3" r="4.3" fill="#b02010"/><circle cx="31.1" cy="10.3" r="1.3" fill="#e09060"/>
<rect x="13.5" y="19" width="9" height="7.5" rx="1" fill="#9a7a8a" stroke="#111" stroke-width="1.5"/>
<rect x="26" y="19" width="9" height="7.5" rx="1" fill="#9a7a8a" stroke="#111" stroke-width="1.5"/>
<path d="M22.5 21 H26" stroke="#111" stroke-width="1.5"/>
<circle cx="18" cy="22.7" r="1" fill="#111"/><circle cx="30.5" cy="22.7" r="1" fill="#111"/>
<path d="M21.5 31 Q24.5 30 27.5 31 Q24.5 35 21.5 31 Z" fill="#8a1a10"/>
<path d="M12 41 H36 L38 48 H10 Z" fill="#8a92ac"/><path d="M10 48 L16 41 L20 46 L24 41 L28 46 L32 41 L38 48 Z" fill="#8a5a1a"/></g></svg>
<div style="font-family:'Liberation Sans',sans-serif;font-size:21.5px;line-height:21.5px;font-weight:400;color:#121212;position:absolute;left:728.50px;top:1002.00px;white-space:pre;">Юлия</div>
<div style="font-family:'Liberation Sans',sans-serif;font-size:21.5px;line-height:21.5px;font-weight:400;color:#121212;position:absolute;left:970.00px;top:1001.00px;white-space:pre;">16 дек. 2021</div>
<div style="font-family:'Liberation Sans',sans-serif;font-size:21.5px;line-height:21.5px;font-weight:400;color:#121212;position:absolute;left:1243.50px;top:1001.00px;white-space:pre;">Администратор</div>
<div style="position:absolute;left:663px;top:1043px;width:737px;height:16px;background:#5f5e61;border-radius:8px;"></div>
<div style="font-family:'Liberation Sans',sans-serif;font-size:21.5px;line-height:21.5px;font-weight:400;color:#121212;letter-spacing:-0.643px;position:absolute;left:677.00px;top:1095.00px;white-space:pre;">Всего —</div>
<div style="font-family:'Liberation Sans',sans-serif;font-size:21.5px;line-height:21.5px;font-weight:700;color:#121212;letter-spacing:-2.434px;position:absolute;left:765.00px;top:1095.00px;white-space:pre;">11</div>
<div style="position:absolute;left:1367px;top:0px;width:25px;height:1440px;background:linear-gradient(90deg,rgba(0,0,0,0) 0%,rgba(0,0,0,0.07) 60%,rgba(0,0,0,0.2) 100%);"></div>
<div style="position:absolute;left:1393px;top:0px;width:1167px;height:1440px;background:#ffffff;"></div>
<div style="position:absolute;left:1391px;top:0px;width:2px;height:1440px;background:#3a3b3d;"></div>
<div style="position:absolute;left:1393px;top:86px;width:1167px;height:2px;background:#eceef1;"></div>
<div style="position:absolute;left:2481px;top:0px;width:1px;height:87px;background:#e6e8eb;"></div>
<svg style="position:absolute;left:2510px;top:28px;" width="28" height="28" viewBox="0 0 28 28"><path d="M2 2 L26 26 M26 2 L2 26" stroke="#8c8c8e" stroke-width="2.4"/></svg>
<div style="font-family:'Liberation Sans',sans-serif;font-size:42px;line-height:42px;font-weight:400;color:#222326;letter-spacing:-0.194px;position:absolute;left:1421.00px;top:22.00px;white-space:pre;">Амалия</div>
<div style="position:absolute;left:1421px;top:176px;width:1116px;height:2px;background:#e8e9ec;"></div>
<div style="position:absolute;left:2326px;top:174px;width:151px;height:4px;background:#1a73e8;"></div>
<div style="font-family:'Liberation Sans',sans-serif;font-size:24.5px;line-height:24.5px;font-weight:400;color:#1d1d1f;letter-spacing:0.184px;position:absolute;left:1442.50px;top:134.00px;white-space:pre;">Общие</div>
<div style="font-family:'Liberation Sans',sans-serif;font-size:24.5px;line-height:24.5px;font-weight:400;color:#1d1d1f;letter-spacing:0.047px;position:absolute;left:1566.50px;top:134.00px;white-space:pre;">Доступ</div>
<div style="font-family:'Liberation Sans',sans-serif;font-size:24.5px;line-height:24.5px;font-weight:400;color:#1d1d1f;letter-spacing:-0.581px;position:absolute;left:1690.00px;top:134.00px;white-space:pre;">Баланс</div>
<div style="font-family:'Liberation Sans',sans-serif;font-size:24.5px;line-height:24.5px;font-weight:400;color:#1d1d1f;letter-spacing:0.314px;position:absolute;left:1812.50px;top:134.00px;white-space:pre;">Устройства</div>
<div style="font-family:'Liberation Sans',sans-serif;font-size:24.5px;line-height:24.5px;font-weight:400;color:#1d1d1f;letter-spacing:0.285px;position:absolute;left:1987.00px;top:134.00px;white-space:pre;">Правила расчета зарплаты</div>
<div style="font-family:'Liberation Sans',sans-serif;font-size:24.5px;line-height:24.5px;font-weight:400;color:#1a73e8;letter-spacing:0.246px;position:absolute;left:2346.00px;top:134.00px;white-space:pre;">Зарплата</div>
<div style="position:absolute;left:1421px;top:233px;width:1116px;height:255px;background:#f3f3f5;border-radius:8px;"></div>
<div style="font-family:'Liberation Sans',sans-serif;font-size:20.5px;line-height:20.5px;font-weight:700;color:#1a6fd9;letter-spacing:0.998px;position:absolute;left:1449.50px;top:257.00px;white-space:pre;">Текущий баланс</div>
<div style="font-family:'Liberation Sans',sans-serif;font-size:27.5px;line-height:27.5px;font-weight:700;color:#222326;letter-spacing:0.036px;position:absolute;left:1449.50px;top:289.00px;white-space:pre;">-2 900,22 €</div>
<div style="font-family:'Liberation Sans',sans-serif;font-size:20.5px;line-height:20.5px;font-weight:400;color:#2a2b2e;letter-spacing:0.758px;position:absolute;left:1449.50px;top:330.00px;white-space:pre;">Мы должны сотруднику</div>
<div style="font-family:'Liberation Sans',sans-serif;font-size:27.5px;line-height:27.5px;font-weight:700;color:#1a6fd9;letter-spacing:0.949px;position:absolute;left:1449.50px;top:385.00px;white-space:pre;">Расчетная сумма к выплате</div>
<div style="font-family:'Liberation Sans',sans-serif;font-size:41px;line-height:41px;font-weight:700;color:#222326;letter-spacing:0.241px;position:absolute;left:1450.50px;top:424.00px;white-space:pre;">17 014,67 €</div>
<div style="font-family:'Liberation Sans',sans-serif;font-size:20.5px;line-height:20.5px;font-weight:700;color:#222326;letter-spacing:0.142px;position:absolute;left:2109.50px;top:288.00px;white-space:pre;">Ноябрь 2025:</div>
<div style="font-family:'Liberation Sans',sans-serif;font-size:20.5px;line-height:20.5px;font-weight:400;color:#2a2b2e;letter-spacing:0.835px;position:absolute;left:2253.50px;top:288.00px;white-space:pre;">К начислению</div>
<div style="font-family:'Liberation Sans',sans-serif;font-size:20.5px;line-height:20.5px;font-weight:700;color:#ea9117;letter-spacing:0.099px;position:absolute;left:2404.00px;top:288.00px;white-space:pre;">1 000 €</div>
<svg style="position:absolute;left:2482px;top:285px;" width="27" height="27" viewBox="0 0 27 27"><path d="M2 2 L25 25 M25 2 L2 25" stroke="#ea9117" stroke-width="2.4" stroke-linecap="round"/></svg>
<div style="font-family:'Liberation Sans',sans-serif;font-size:20.5px;line-height:20.5px;font-weight:700;color:#222326;letter-spacing:0.365px;position:absolute;left:2101.50px;top:350.00px;white-space:pre;">Октябрь 2025:</div>
<div style="font-family:'Liberation Sans',sans-serif;font-size:20.5px;line-height:20.5px;font-weight:400;color:#2a2b2e;letter-spacing:0.658px;position:absolute;left:2258.00px;top:350.00px;white-space:pre;">Начислено</div>
<div style="font-family:'Liberation Sans',sans-serif;font-size:20.5px;line-height:20.5px;font-weight:700;color:#129647;letter-spacing:0.177px;position:absolute;left:2374.50px;top:350.00px;white-space:pre;">2 522,50 €</div>
<svg style="position:absolute;left:2481px;top:350px;" width="30" height="23" viewBox="0 0 30 23"><path d="M2 11 L10.5 20 L28 2.5" fill="none" stroke="#129647" stroke-width="3.4" stroke-linecap="round" stroke-linejoin="round"/></svg>
<div style="font-family:'Liberation Sans',sans-serif;font-size:20.5px;line-height:20.5px;font-weight:700;color:#222326;letter-spacing:0.153px;position:absolute;left:2121.50px;top:411.00px;white-space:pre;">Сентябрь 2025:</div>
<div style="font-family:'Liberation Sans',sans-serif;font-size:20.5px;line-height:20.5px;font-weight:400;color:#2a2b2e;letter-spacing:0.658px;position:absolute;left:2287.50px;top:411.00px;white-space:pre;">Начислено</div>
<div style="font-family:'Liberation Sans',sans-serif;font-size:20.5px;line-height:20.5px;font-weight:700;color:#129647;letter-spacing:0.099px;position:absolute;left:2404.00px;top:411.00px;white-space:pre;">8 800 €</div>
<svg style="position:absolute;left:2481px;top:412px;" width="30" height="23" viewBox="0 0 30 23"><path d="M2 11 L10.5 20 L28 2.5" fill="none" stroke="#129647" stroke-width="3.4" stroke-linecap="round" stroke-linejoin="round"/></svg>
<div style="position:absolute;left:1421px;top:529px;width:173px;height:59px;background:#139c48;border-radius:5px;"></div>
<svg style="position:absolute;left:1449px;top:548px;" width="19" height="19" viewBox="0 0 19 19"><path d="M9.5 1 V18 M1 9.5 H18" stroke="#ffffff" stroke-width="3.2"/></svg>
<div style="font-family:'Liberation Sans',sans-serif;font-size:22px;line-height:22px;font-weight:700;color:#ffffff;letter-spacing:0.531px;position:absolute;left:1481.50px;top:550.00px;white-space:pre;">Платеж</div>
<div style="position:absolute;left:2174px;top:530px;width:173px;height:57px;background:#ffffff;border:2px solid #d5d6d9;border-radius:5px;box-sizing:border-box;"></div>
<svg style="position:absolute;left:2201.5px;top:549px;" width="18" height="18" viewBox="0 0 18 18"><path d="M9 1 V17 M1 9 H17" stroke="#1f1f21" stroke-width="3.2"/></svg>
<div style="font-family:'Liberation Sans',sans-serif;font-size:22px;line-height:22px;font-weight:400;color:#1f1f21;letter-spacing:0.975px;position:absolute;left:2234.00px;top:550.00px;white-space:pre;">Премия</div>
<div style="position:absolute;left:2372.5px;top:530px;width:164.5px;height:57px;background:#ffffff;border:2px solid #d5d6d9;border-radius:5px;box-sizing:border-box;"></div>
<div style="position:absolute;left:2401px;top:556.5px;width:18px;height:3.0px;background:#1f1f21;"></div>
<div style="font-family:'Liberation Sans',sans-serif;font-size:22px;line-height:22px;font-weight:400;color:#1f1f21;letter-spacing:0.297px;position:absolute;left:2433.50px;top:550.00px;white-space:pre;">Штраф</div>
<div style="font-family:'Liberation Sans',sans-serif;font-size:20.5px;line-height:20.5px;font-weight:700;color:#1f1f21;letter-spacing:0.953px;position:absolute;left:1421.50px;top:622.00px;white-space:pre;">Месяц</div>
<div style="position:absolute;left:1421px;top:651px;width:372px;height:57px;background:#ffffff;border:2px solid #cfd0d3;border-radius:5px;box-sizing:border-box;"></div>
<svg style="position:absolute;left:1444px;top:665px;" width="27" height="28" viewBox="0 0 27 28"><rect x="1.5" y="4" width="24" height="22.5" rx="3" fill="none" stroke="#8a8a8c" stroke-width="2"/><path d="M1.5 10 H25.5 M8 1 V6 M19 1 V6" stroke="#8a8a8c" stroke-width="2"/><g fill="#8a8a8c"><rect x="6" y="14" width="2.5" height="2.5"/><rect x="12" y="14" width="2.5" height="2.5"/><rect x="18" y="14" width="2.5" height="2.5"/><rect x="6" y="20" width="2.5" height="2.5"/><rect x="12" y="20" width="2.5" height="2.5"/><rect x="18" y="20" width="2.5" height="2.5"/></g></svg>
<div style="font-family:'Liberation Sans',sans-serif;font-size:22px;line-height:22px;font-weight:400;color:#2a2b2e;letter-spacing:0.273px;position:absolute;left:1485.00px;top:670.00px;white-space:pre;">2025-10-01</div>
<svg style="position:absolute;left:1812px;top:665px;" width="30" height="25" viewBox="0 0 30 25"><path d="M3.5 11.5 L11 19.5 L26.5 4" fill="none" stroke="#129647" stroke-width="5.5" stroke-linecap="butt" stroke-linejoin="miter"/></svg>
<div style="position:absolute;left:1421px;top:736px;width:54.5px;height:70.5px;background:#ededf0;"></div>
<div style="position:absolute;left:1477.5px;top:736px;width:222.0px;height:70.5px;background:#ededf0;"></div>
<div style="position:absolute;left:1701.5px;top:736px;width:644.5px;height:70.5px;background:#ededf0;"></div>
<div style="position:absolute;left:2348px;top:736px;width:189px;height:70.5px;background:#ededf0;"></div>
<div style="font-family:'Liberation Sans',sans-serif;font-size:21.5px;line-height:21.5px;font-weight:400;color:#2a2b2e;letter-spacing:-0.030px;position:absolute;left:1491.50px;top:755.00px;white-space:pre;">Дата и время</div>
<div style="font-family:'Liberation Sans',sans-serif;font-size:21.5px;line-height:21.5px;font-weight:400;color:#2a2b2e;letter-spacing:0.232px;position:absolute;left:1715.50px;top:755.00px;white-space:pre;">Документ</div>
<div style="font-family:'Liberation Sans',sans-serif;font-size:21.5px;line-height:21.5px;font-weight:400;color:#2a2b2e;letter-spacing:-0.496px;position:absolute;right:38.50px;top:755.00px;white-space:pre;margin-right:0.496px;">Сумма, €</div>
<div style="position:absolute;left:1421px;top:862px;width:1116px;height:2px;background:#e9eaed;"></div>
<div style="position:absolute;left:1421px;top:919px;width:1116px;height:2px;background:#e9eaed;"></div>
<div style="position:absolute;left:1421px;top:976px;width:1116px;height:2px;background:#e9eaed;"></div>
<div style="font-family:'Liberation Sans',sans-serif;font-size:21.5px;line-height:21.5px;font-weight:400;color:#2a2b2e;letter-spacing:-0.060px;position:absolute;left:1491.50px;top:823.00px;white-space:pre;">25 окт. 2025 00:00</div>
<div style="font-family:'Liberation Sans',sans-serif;font-size:21.5px;line-height:21.5px;font-weight:400;color:#2a2b2e;letter-spacing:-0.207px;position:absolute;left:1715.50px;top:823.00px;white-space:pre;">Ставка, месячная</div>
<div style="font-family:'Liberation Sans',sans-serif;font-size:21.5px;line-height:21.5px;font-weight:400;color:#2a2b2e;letter-spacing:-0.453px;position:absolute;right:38.50px;top:824.00px;white-space:pre;margin-right:0.453px;">1 500</div>
<svg style="position:absolute;left:1438px;top:877px;" width="16" height="25" viewBox="0 0 16 25"><path d="M2 2 L13 12.5 L2 23" fill="none" stroke="#9a9a9c" stroke-width="2"/></svg>
<div style="font-family:'Liberation Sans',sans-serif;font-size:21.5px;line-height:21.5px;font-weight:400;color:#2a2b2e;letter-spacing:-0.060px;position:absolute;left:1491.50px;top:879.00px;white-space:pre;">23 окт. 2025 12:33</div>
<svg style="position:absolute;left:1715px;top:877px;" width="28" height="28" viewBox="0 0 28 28"><rect x="1.5" y="1.5" width="25" height="25" fill="none" stroke="#2ba866" stroke-width="3"/><rect x="8" y="8" width="12" height="12" fill="#2ba866"/></svg>
<div style="font-family:'Liberation Sans',sans-serif;font-size:21.5px;line-height:21.5px;font-weight:400;color:#2a2b2e;letter-spacing:-0.352px;position:absolute;left:1750.00px;top:883.00px;white-space:pre;">Заказ</div>
<div style="font-family:'Liberation Sans',sans-serif;font-size:21.5px;line-height:21.5px;font-weight:400;color:#1a6fd9;letter-spacing:-1.445px;position:absolute;left:1815.00px;top:883.00px;white-space:pre;">№A637</div>
<div style="font-family:'Liberation Sans',sans-serif;font-size:21.5px;line-height:21.5px;font-weight:400;color:#2a2b2e;letter-spacing:-0.045px;position:absolute;left:1889.50px;top:883.00px;white-space:pre;">(Ноутбук Acer Aspire 7)</div>
<div style="font-family:'Liberation Sans',sans-serif;font-size:21.5px;line-height:21.5px;font-weight:400;color:#2a2b2e;letter-spacing:-0.203px;position:absolute;right:38.50px;top:881.00px;white-space:pre;margin-right:0.203px;">22,50</div>
<div style="font-family:'Liberation Sans',sans-serif;font-size:21.5px;line-height:21.5px;font-weight:400;color:#2a2b2e;letter-spacing:-0.060px;position:absolute;left:1491.50px;top:937.00px;white-space:pre;">01 окт. 2025 00:00</div>
<div style="font-family:'Liberation Sans',sans-serif;font-size:21.5px;line-height:21.5px;font-weight:400;color:#2a2b2e;letter-spacing:-0.207px;position:absolute;left:1715.50px;top:937.00px;white-space:pre;">Ставка, месячная</div>
<div style="font-family:'Liberation Sans',sans-serif;font-size:21.5px;line-height:21.5px;font-weight:400;color:#2a2b2e;letter-spacing:-0.453px;position:absolute;right:38.50px;top:938.00px;white-space:pre;margin-right:0.453px;">1 000</div>
<div style="font-family:'Liberation Sans',sans-serif;font-size:21.5px;line-height:21.5px;font-weight:400;color:#2a2b2e;letter-spacing:-0.560px;position:absolute;left:1435.50px;top:1019.00px;white-space:pre;">Всего —</div>
<div style="font-family:'Liberation Sans',sans-serif;font-size:21.5px;line-height:21.5px;font-weight:700;color:#2a2b2e;position:absolute;left:1521.50px;top:1019.00px;white-space:pre;">3</div>
<div style="font-family:'Liberation Sans',sans-serif;font-size:21.5px;line-height:21.5px;font-weight:400;color:#2a2b2e;letter-spacing:0.134px;position:absolute;left:2244.50px;top:1017.00px;white-space:pre;">Итого:</div>
<div style="position:absolute;left:2322.5px;top:998px;width:214.5px;height:58px;background:#efeff1;border-radius:5px;"></div>
<div style="font-family:'Liberation Sans',sans-serif;font-size:21.5px;line-height:21.5px;font-weight:700;color:#2a2b2e;letter-spacing:-0.236px;position:absolute;right:36.50px;top:1017.00px;white-space:pre;margin-right:0.236px;">2 522,50 €</div>
<div style="position:absolute;left:1393px;top:1331px;width:1167px;height:109px;background:#eef3fb;"></div>
<div style="position:absolute;left:1421px;top:1359px;width:178px;height:57px;background:#1a73e3;border-radius:5px;"></div>
<div style="font-family:'Liberation Sans',sans-serif;font-size:22px;line-height:22px;font-weight:700;color:#ffffff;letter-spacing:0.148px;position:absolute;left:1450.00px;top:1379.00px;white-space:pre;">Сохранить</div>
<div style="position:absolute;left:2158px;top:1359px;width:279px;height:57px;background:#ffffff;border:2px solid #d2d3d6;border-radius:5px;box-sizing:border-box;"></div>
<svg style="position:absolute;left:2187px;top:1374px;" width="28" height="28" viewBox="0 0 28 28"><circle cx="14" cy="14" r="12" fill="none" stroke="#e3201f" stroke-width="3"/><path d="M5.5 5.5 L22.5 22.5" stroke="#e3201f" stroke-width="3"/></svg>
<div style="font-family:'Liberation Sans',sans-serif;font-size:22px;line-height:22px;font-weight:400;color:#1f1f21;letter-spacing:1.093px;position:absolute;left:2228.50px;top:1379.00px;white-space:pre;">Деактивировать</div>
<div style="position:absolute;left:2452px;top:1359px;width:85px;height:57px;background:#ef1e1e;border-radius:5px;"></div>
<svg style="position:absolute;left:2482px;top:1373px;" width="25" height="30" viewBox="0 0 25 30"><path d="M8 4 V1.5 H17 V4" fill="none" stroke="#fff" stroke-width="3"/><rect x="0" y="4" width="25" height="4" rx="1" fill="#fff"/><path d="M2.5 10 H22.5 L21 28 Q21 29.5 19.5 29.5 H5.5 Q4 29.5 4 28 Z" fill="#fff"/><rect x="8.5" y="13" width="2.6" height="12" fill="#ef1e1e"/><rect x="14" y="13" width="2.6" height="12" fill="#ef1e1e"/></svg>
</body></html>
